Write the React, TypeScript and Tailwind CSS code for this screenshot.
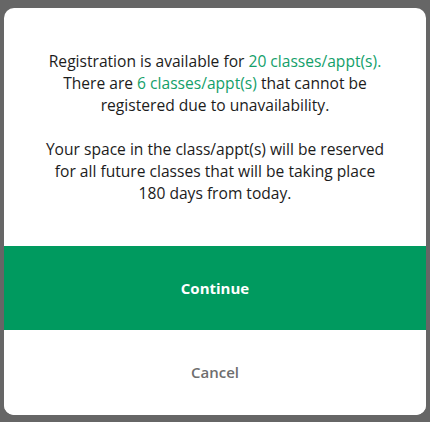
export default function App() {
  return (
    <div
      className="w-[430px] h-[422px] bg-[#666666] overflow-hidden pt-[8px] px-[4px] pb-[7px] flex"
      style={{ fontFamily: '"Open Sans", sans-serif' }}
    >
      <div className="flex-1 bg-white rounded-[10px] overflow-hidden flex flex-col">
        <div className="h-[238px] flex flex-col justify-center items-center text-center text-[15.6px] leading-[22px] text-[#1c1c1c] px-4">
          <p>
            Registration is available for{" "}
            <span className="text-[#13a06a]">20 classes/appt(s).</span>
            <br />
            There are <span className="text-[#13a06a]">6 classes/appt(s)</span> that cannot be
            <br />
            registered due to unavailability.
          </p>
          <p className="mt-[22px]">
            Your space in the class/appt(s) will be reserved
            <br />
            for all future classes that will be taking place
            <br />
            180 days from today.
          </p>
        </div>
        <button className="h-[84px] w-full bg-[#009a5f] text-white font-bold text-[15px] flex items-center justify-center">
          Continue
        </button>
        <button className="flex-1 w-full bg-white text-[#6e6e6e] font-semibold text-[15px] flex items-center justify-center">
          Cancel
        </button>
      </div>
    </div>
  );
}
